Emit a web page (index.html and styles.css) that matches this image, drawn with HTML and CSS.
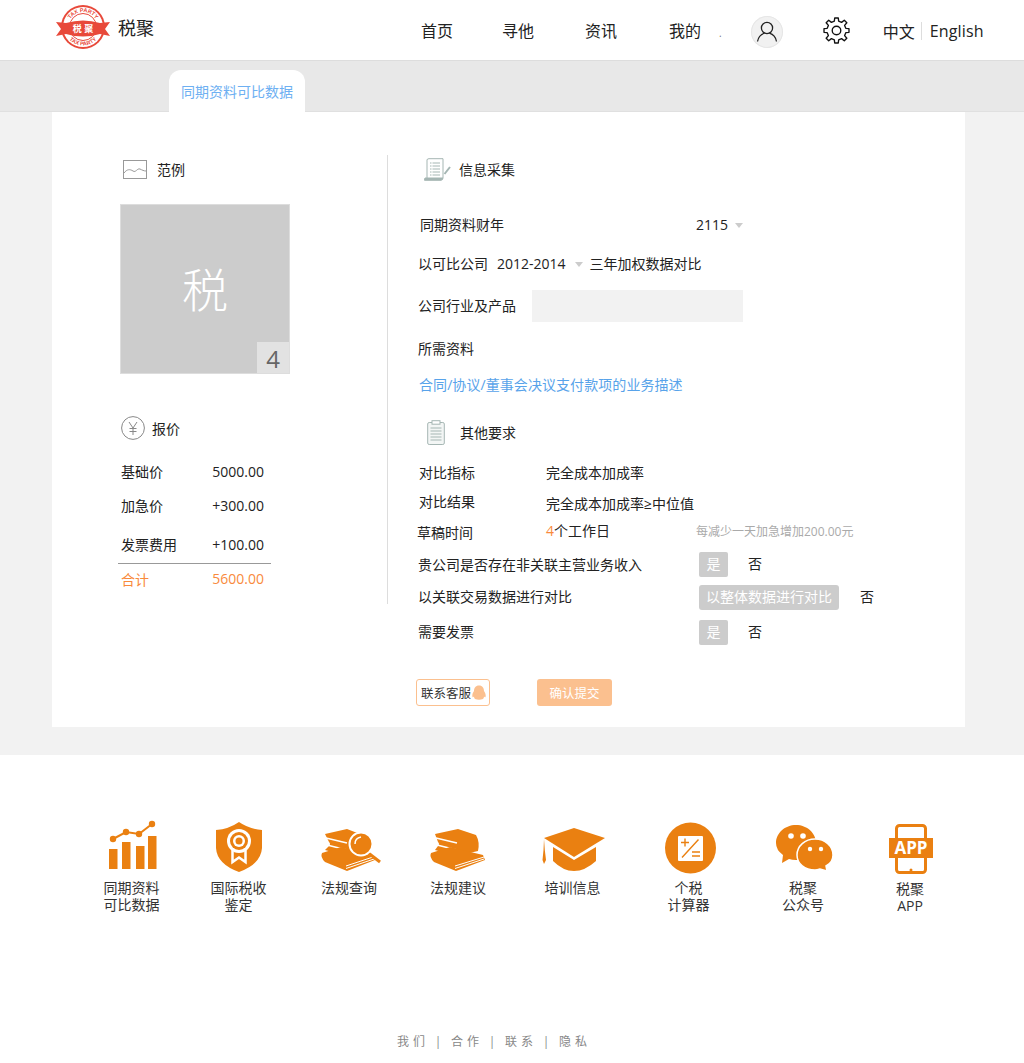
FILE: index.html
```html
<!DOCTYPE html>
<html lang="zh">
<head>
  <meta charset="UTF-8">
  <title>税聚 - 同期资料可比数据</title>
  <link rel="stylesheet" href="styles.css">
</head>
<body>
  <header class="top-bar">
    <a class="logo">
      <svg class="logo-mark" viewBox="0 0 54 48">
        <defs>
          <path id="arcTop" d="M12 24 A15 15 0 0 1 42 24"/>
          <path id="arcBottom" d="M8.500 24 A18.500 18.500 0 0 0 45.500 24"/>
        </defs>
        <circle cx="27" cy="24" r="22" fill="#e8493a"/>
        <circle cx="27" cy="24" r="20" fill="#fff"/>
        <circle cx="27" cy="24" r="13.500" fill="#fff" stroke="#e8493a" stroke-width="1"/>
        <text class="logo-arc"><textPath href="#arcTop" startOffset="50%" text-anchor="middle">TAX PARTY</textPath></text>
        <text class="logo-arc"><textPath href="#arcBottom" startOffset="50%" text-anchor="middle">TAX PARTY</textPath></text>
        <path d="M0 19 L10 20 Q27 15 44 20 L54 19 L49 26 L54 33 L44 31 Q27 36 10 31 L0 33 L5 26Z" fill="#e8493a"/>
        <text class="logo-name" x="27" y="29" text-anchor="middle">税 聚</text>
      </svg>
      <span class="logo-text">税聚</span>
    </a>
    <nav class="main-nav">
      <a class="nav-home">首页</a>
      <a class="nav-find">寻他</a>
      <a class="nav-news">资讯</a>
      <a class="nav-mine">我的</a>
    </nav>
    <span class="nav-dot">.</span>
    <span class="avatar">
      <svg viewBox="0 0 32 32" width="32" height="32" fill="none" stroke="#222" stroke-width="1.3">
        <circle cx="16" cy="12" r="5.600"/>
        <path d="M6.500 25.500 C7.500 20 11 18 13.500 17.200 M25.500 25.500 C24.500 20 21 18 18.500 17.200"/>
      </svg>
    </span>
    <svg class="gear" viewBox="0 0 24 24" fill="none" stroke="#111" stroke-width="1.2" stroke-linejoin="round">
      <path d="M10.400 .9 L13.600 .9 L13.910 3.720 L16.500 4.790 L18.920 2.820 L21.180 5.080 L19.210 7.500 L20.280 10.090 L23.100 10.400 L23.100 13.600 L20.280 13.910 L19.210 16.500 L21.180 18.920 L18.920 21.180 L16.500 19.210 L13.910 20.280 L13.600 23.100 L10.400 23.100 L10.090 20.280 L7.500 19.210 L5.080 21.180 L2.820 18.920 L4.790 16.500 L3.720 13.910 L.9 13.600 L.9 10.400 L3.720 10.090 L4.790 7.500 L2.820 5.080 L5.080 2.820 L7.500 4.790 L10.090 3.720Z"/>
      <circle cx="12" cy="12" r="3.800"/>
    </svg>
    <div class="lang">
      <a class="lang-cn">中文</a>
      <a class="lang-en">English</a>
    </div>
  </header>

  <div class="tab-bar">
    <div class="tab">同期资料可比数据</div>
  </div>

  <main class="page">
    <section class="card">
      <div class="columns">
        <div class="left-col">
          <div class="heading">
            <svg class="icon-sample" viewBox="0 0 24 19" fill="none" stroke="#999" stroke-width="1">
              <rect x=".5" y=".5" width="23" height="18"/>
              <path d="M1 13 C4 9 7 9 10 11 C13 13 14 8 17 9 C19 10 21 11 23 11"/>
            </svg>
            <span>范例</span>
          </div>
          <div class="sample-box">
            <span class="sample-char">税</span>
            <span class="sample-count">4</span>
          </div>
          <div class="heading heading-price">
            <svg class="icon-yen" viewBox="0 0 24 24" fill="none" stroke="#888" stroke-width="1">
              <circle cx="12" cy="12" r="11.400"/>
              <path d="M8 6 L12 12 L16 6 M12 12 V19 M8.500 12.500 H15.500 M8.500 15.500 H15.500"/>
            </svg>
            <span>报价</span>
          </div>
          <div class="price price-base"><span>基础价</span><span>5000.00</span></div>
          <div class="price price-rush"><span>加急价</span><span>+300.00</span></div>
          <div class="price price-bill"><span>发票费用</span><span>+100.00</span></div>
          <div class="price price-total"><span>合计</span><span>5600.00</span></div>
        </div>

        <div class="right-col">
          <div class="heading heading-info">
            <svg class="icon-scroll" viewBox="0 0 27 23" fill="none" stroke="#a5b6b3" stroke-width="1">
              <path d="M3 20 V2 Q3 .7 5 .7 H19 V20"/>
              <path d="M.5 22.300 H17 Q19 22 19 20 H1 Q.5 21 .5 22.300Z" fill="#a5b6b3"/>
              <path d="M6 5 H16 M6 8 H16 M6 11 H16 M6 14 H16 M6 17 H16" stroke-dasharray="1.5 1 8"/>
              <path d="M20.500 16 L26 9" stroke-width="2"/>
            </svg>
            <span>信息采集</span>
          </div>

          <div class="row row-year">
            <span class="year-label">同期资料财年</span>
            <span>2115</span><i class="caret"></i>
          </div>
          <div class="row row-range">
            <span class="range-label">以可比公司</span>
            <span>2012-2014</span><i class="caret caret-range"></i>
            <span>三年加权数据对比</span>
          </div>
          <div class="row row-product">
            <span class="product-label">公司行业及产品</span>
            <input class="product-input" type="text">
          </div>
          <div class="row row-need">所需资料</div>
          <div class="row row-link"><a class="doc-link">合同/协议/董事会决议支付款项的业务描述</a></div>

          <div class="heading heading-other">
            <svg class="icon-clip" viewBox="0 0 18 25" fill="none" stroke="#a5b6b3" stroke-width="1">
              <rect x=".7" y="2.500" width="16.600" height="22" rx="1.500" fill="#f3f6f5"/>
              <rect x="5" y=".7" width="8" height="3.500" fill="#fff"/>
              <path d="M3.500 8 H14.500 M3.500 11 H14.500 M3.500 14 H14.500 M3.500 17 H14.500 M3.500 20 H14.500"/>
            </svg>
            <span>其他要求</span>
          </div>

          <div class="row row-metric"><span class="key">对比指标</span><span>完全成本加成率</span></div>
          <div class="row row-result"><span class="key key-up">对比结果</span><span class="val-down">完全成本加成率≥中位值</span></div>
          <div class="row row-draft">
            <span class="key key-draft">草稿时间</span>
            <span class="draft-days"><em class="days-num">4</em>个工作日</span>
            <span class="hint">每减少一天加急增加200.00元</span>
          </div>
          <div class="row row-choice row-income">
            <span class="choice-label">贵公司是否存在非关联主营业务收入</span>
            <span class="pill">是</span><span class="no">否</span>
          </div>
          <div class="row row-choice row-related">
            <span class="choice-label">以关联交易数据进行对比</span>
            <span class="pill pill-wide">以整体数据进行对比</span><span class="no no-wide">否</span>
          </div>
          <div class="row row-choice row-bill">
            <span class="choice-label">需要发票</span>
            <span class="pill">是</span><span class="no">否</span>
          </div>

          <div class="actions">
            <button class="btn-service" type="button">联系客服
              <svg class="icon-qq" viewBox="0 0 14 15"><path d="M7 .5 C10.500 .5 12 3 12 6 C13.500 8 14 10 13.500 12 C13 12.500 12.500 12 12 11.500 C12 12.500 11.500 13.500 11 14 Q7 15.500 3 14 C2.500 13.500 2 12.500 2 11.500 C1.500 12 1 12.500 .5 12 C0 10 .5 8 2 6 C2 3 3.500 .5 7 .5Z" fill="#fbc08f"/></svg>
            </button>
            <button class="btn-submit" type="button">确认提交</button>
          </div>
        </div>
      </div>
    </section>
  </main>

  <footer class="footer">
    <div class="services">
      <a class="service">
        <svg viewBox="0 0 64 60" fill="#ea8011">
          <rect x="9" y="29" width="8.500" height="20"/>
          <rect x="22" y="22" width="8.500" height="27"/>
          <rect x="36" y="26" width="8.500" height="23"/>
          <rect x="48" y="16" width="8.500" height="33"/>
          <path d="M13 19 L26 12 L39 14 L52 4" fill="none" stroke="#ea8011" stroke-width="2"/>
          <circle cx="13" cy="19" r="3.200"/><circle cx="26" cy="12" r="3.200"/><circle cx="39" cy="14" r="3.200"/><circle cx="52" cy="4" r="3.200"/>
        </svg>
        <span>同期资料<br>可比数据</span>
      </a>
      <a class="service">
        <svg viewBox="0 0 64 60">
          <path d="M32 2 Q22 9 9 10 V28 Q10 44 32 52 Q54 44 55 28 V10 Q42 9 32 2Z" fill="#ea8011"/>
          <path d="M25.500 30 V42 L32 37.500 L38.500 42 V30" fill="none" stroke="#fff" stroke-width="2.500"/>
          <circle cx="32" cy="21" r="12" fill="#fff"/>
          <circle cx="32" cy="21" r="9" fill="#ea8011"/>
          <circle cx="32" cy="21" r="6" fill="#fff"/>
          <circle cx="32" cy="21" r="3.500" fill="#ea8011"/>
        </svg>
        <span>国际税收<br>鉴定</span>
      </a>
      <a class="service">
        <svg viewBox="0 0 64 60">
          <path d="M8 14 L30 9 L48 16 V30 L30 36 L8 30 L12 26 Q14 24 12 22Z" fill="#ea8011"/>
          <path d="M9 18 L30 23 M10 25 L30 30" stroke="#fff" stroke-width="1.500"/>
          <path d="M5 33 L24 27 L55 36 L58 40 L30 51 L8 42 Q3 37 5 33Z" fill="#ea8011"/>
          <path d="M29 46 L56 37 M29 48.500 L57 39" stroke="#fff" stroke-width="1"/>
          <path d="M50 32 L63 42" stroke="#ea8011" stroke-width="3"/>
          <circle cx="44" cy="24" r="11.500" fill="#ea8011" stroke="#fff" stroke-width="2"/>
          <path d="M38 24 Q38 18 44 17" fill="none" stroke="#fff" stroke-width="1.500"/>
        </svg>
        <span>法规查询</span>
      </a>
      <a class="service">
        <svg viewBox="0 0 64 60">
          <path d="M9 14 L32 9 L50 15 Q54 22 52 31 L30 36 L9 30 L12 26 Q14 24 12 22Z" fill="#ea8011"/>
          <path d="M10 18 L31 23 M11 25 L31 30" stroke="#fff" stroke-width="1.500"/>
          <path d="M5 33 L24 27 L57 35 L59 40 L30 51 L8 42 Q3 37 5 33Z" fill="#ea8011"/>
          <path d="M29 46 L58 37 M29 48.500 L58 39" stroke="#fff" stroke-width="1"/>
        </svg>
        <span>法规建议</span>
      </a>
      <a class="service">
        <svg viewBox="0 0 64 60" fill="#ea8011">
          <path d="M33 8 L64 18 L33 37 L3 18Z"/>
          <path d="M12 27 L33 40 L55 27 V41 Q44 51 33 51 Q22 51 12 41Z"/>
          <path d="M3 19 L3.800 30 L5 40 L3 44 L1.500 40 L2.500 30Z"/>
        </svg>
        <span>培训信息</span>
      </a>
      <a class="service">
        <svg viewBox="0 0 64 60">
          <circle cx="33.500" cy="28" r="25.500" fill="#ea8011"/>
          <rect x="21" y="16" width="25" height="25" rx="1" fill="#fff"/>
          <path d="M41.500 19.500 L25 37.500 M24 22.500 H32 M28 18.500 V26.500 M35 32 H43 M35 36 H43" stroke="#ea8011" stroke-width="1.400" fill="none"/>
        </svg>
        <span>个税<br>计算器</span>
      </a>
      <a class="service">
        <svg viewBox="0 0 64 60">
          <path d="M5 23 C5 13 14 5 25 5 C36 5 45 13 45 23 C45 33 36 40 25 40 Q21 40 18 39 L11 43 L12 35 Q5 30 5 23Z" fill="#ea8011"/>
          <path d="M26 35 C26 26 34 19 44 19 C54 19 62 26 62 35 C62 41 59 44 55 46 L56 51 L49 49 Q46 50 44 50 C34 50 26 44 26 35Z" fill="#ea8011" stroke="#fff" stroke-width="1.500"/>
          <circle cx="20" cy="16" r="2.800" fill="#fff"/><circle cx="32" cy="16" r="2.800" fill="#fff"/>
          <circle cx="39" cy="29" r="2.200" fill="#fff"/><circle cx="50" cy="29" r="2.200" fill="#fff"/>
        </svg>
        <span>税聚<br>公众号</span>
      </a>
      <a class="service service-app">
        <svg viewBox="0 0 64 60">
          <rect x="18.500" y="5.500" width="29" height="47" rx="3" fill="none" stroke="#ea8011" stroke-width="3"/>
          <rect x="11" y="18" width="44" height="20" fill="#ea8011"/>
          <text class="app-word" x="33" y="34" text-anchor="middle">APP</text>
          <circle cx="33" cy="50" r="1.500" fill="#ea8011"/>
        </svg>
        <span>税聚<br>APP</span>
      </a>
    </div>
    <div class="foot-links">
      <a>我们</a><b>|</b><a>合作</a><b>|</b><a>联系</a><b>|</b><a>隐私</a>
    </div>
  </footer>
</body>
</html>
```

FILE: styles.css
```css
* {
  box-sizing: border-box;
}

body {
  margin: 0;
  font-family: "Open Sans", "Noto Sans CJK SC", sans-serif;
  font-size: 14px;
  color: #222;
  background: #fff;
}

/* top bar */
.top-bar {
  display: flex;
  align-items: center;
  height: 61px;
  padding-left: 56px;
  background: #fff;
  border-bottom: 1px solid #ddd;
}

.logo {
  display: flex;
  align-items: center;
  width: 365px;
  margin-top: -6px;
}

.logo-mark {
  width: 54px;
  height: 48px;
}

.logo-arc {
  font-family: "Liberation Sans", sans-serif;
  font-size: 5.500px;
  font-weight: bold;
  fill: #e8493a;
}

.logo-name {
  font-size: 9px;
  font-weight: bold;
  fill: #fff;
}

.logo-text {
  margin-left: 8px;
  font-size: 18px;
  margin-top: -1px;
}

.main-nav {
  display: flex;
  font-size: 16px;
}

.nav-find {
  margin-left: 49px;
}

.nav-news {
  margin-left: 51px;
}

.nav-mine {
  margin-left: 52px;
}

.nav-dot {
  margin-left: 18px;
  font-size: 10px;
  color: #777;
  margin-top: 6px;
}

.avatar {
  width: 32px;
  height: 32px;
  margin-left: 29px;
  margin-top: 4px;
  border-radius: 50%;
  background: #f1f1f1;
  box-shadow: inset 0 0 0 1px #e6e6e6;
}

.avatar svg {
  display: block;
}

.gear {
  width: 27px;
  height: 27px;
  margin-left: 40px;
  margin-top: 1px;
}

.lang {
  display: flex;
  align-items: center;
  margin-left: 33px;
  margin-top: 2px;
  font-size: 16px;
}

.lang-en {
  margin-left: 6px;
  padding-left: 8px;
  border-left: 1px solid #ddd;
  line-height: 18px;
  letter-spacing: .15px;
}

/* tab strip */
.tab-bar {
  display: flex;
  align-items: flex-end;
  height: 51px;
  padding-left: 169px;
  background: #e8e8e8;
  border-bottom: 1px solid #e0e0e0;
}

.tab {
  width: 136px;
  height: 42px;
  margin-bottom: -1px;
  padding: 12px 0 0 12px;
  background: #fff;
  border-radius: 12px 12px 0 0;
  color: #6eb0f2;
  line-height: 20px;
  white-space: nowrap;
}

/* card */
.page {
  height: 643px;
  padding-left: 52px;
  background: #f2f2f2;
}

.card {
  width: 913px;
  height: 615px;
  background: #fff;
}

.columns {
  display: flex;
  padding: 43px 0 0 68px;
}

.left-col {
  width: 268px;
  height: 449px;
  border-right: 1px solid #ddd;
}

.heading {
  display: flex;
  align-items: center;
  height: 30px;
  padding-bottom: 2px;
}

.icon-sample {
  width: 24px;
  height: 19px;
  margin: 0 10px 0 3px;
}

.sample-box {
  position: relative;
  display: flex;
  align-items: center;
  justify-content: center;
  width: 170px;
  height: 170px;
  margin-top: 19px;
  background: #ccc;
  border: 1px solid #ddd;
}

.sample-char {
  color: #fff;
  font-size: 46px;
  font-weight: 300;
  margin-top: -5px;
}

.sample-count {
  position: absolute;
  right: 0;
  bottom: 0;
  width: 32px;
  height: 31px;
  background: #e2e2e2;
  color: #666;
  font-size: 24px;
  line-height: 33px;
  text-align: center;
}

.heading-price {
  margin-top: 40px;
}

.icon-yen {
  width: 24px;
  height: 24px;
  margin: 0 7px 0 1px;
}

.price {
  display: flex;
  justify-content: space-between;
  align-items: center;
  width: 153px;
  height: 30px;
  margin-left: -2px;
  padding: 0 7px 2px 3px;
}

.price-base {
  margin-top: 13px;
}

.price-rush {
  margin-top: 4px;
}

.price-bill {
  margin-top: 9px;
}

.price-total {
  height: 34px;
  margin-top: 3px;
  padding-bottom: 4px;
  border-top: 1px solid #999;
  color: #f98a3c;
}

.right-col {
  padding-left: 30px;
}

.heading-info span {
  margin-left: 8px;
}

.icon-scroll {
  width: 27px;
  height: 23px;
  margin-left: 6px;
}

.row {
  display: flex;
  align-items: center;
  height: 30px;
  padding-bottom: 2px;
  white-space: nowrap;
}

.row-year {
  margin-top: 25px;
}

.year-label {
  width: 276px;
  margin-left: 2px;
}

.caret {
  width: 0;
  height: 0;
  margin: 2px 0 0 7px;
  border-style: solid;
  border-width: 5px 4.500px 0;
  border-color: #ccc transparent transparent;
}

.row-range {
  margin-top: 9px;
}

.range-label {
  width: 79px;
}

.caret-range {
  margin-left: 9px;
  margin-right: 7px;
}

.row-product {
  height: 32px;
  margin-top: 11px;
  padding-bottom: 0;
}

.product-label {
  width: 114px;
  padding-bottom: 2px;
}

.product-input {
  width: 211px;
  height: 32px;
  border: 0;
  background: #f2f2f2;
}

.row-need {
  margin-top: 12px;
}

.row-link {
  margin-top: 6px;
  margin-left: 1px;
  letter-spacing: .07px;
}

.doc-link {
  color: #58a3ea;
}

.heading-other {
  margin-top: 18px;
}

.icon-clip {
  width: 18px;
  height: 25px;
  margin-left: 9px;
}

.heading-other span {
  margin-left: 15px;
}

.row-metric {
  margin-top: 10px;
  margin-left: 1px;
}

.row-result {
  margin-left: 1px;
}

.key {
  width: 127px;
}

.key-up {
  margin-top: -2px;
}

.val-down {
  margin-top: 2px;
}

.row-draft {
  height: 28px;
}

.key-draft {
  width: 129px;
  margin-left: -1px;
  margin-top: 2px;
}

.draft-days {
  width: 150px;
  margin-top: -2px;
}

.days-num {
  color: #f98a3c;
  font-style: normal;
}

.hint {
  font-size: 12px;
  color: #aaa;
}

.row-choice {
  height: 25px;
  padding-bottom: 0;
}

.row-income {
  margin-top: 6px;
}

.row-related {
  margin-top: 8px;
}

.row-bill {
  margin-top: 10px;
}

.choice-label {
  width: 281px;
  padding-bottom: 4px;
}

.row-income .choice-label {
  padding-bottom: 2px;
}

.pill {
  display: flex;
  align-items: center;
  justify-content: center;
  width: 29px;
  height: 25px;
  padding-bottom: 4px;
  background: #ccc;
  border-radius: 2px;
  color: #fff;
}

.pill-wide {
  width: 140px;
  border-radius: 3px;
}

.no {
  margin-left: 20px;
  padding-bottom: 4px;
}

.no-wide {
  margin-left: 21px;
}

.actions {
  display: flex;
  margin-top: 34px;
  margin-left: -2px;
}

.btn-service,
.btn-submit {
  display: flex;
  align-items: center;
  height: 27px;
  padding: 0;
  font-family: inherit;
  font-size: 12.500px;
  border-radius: 3px;
  white-space: nowrap;
}

.btn-service {
  width: 74px;
  padding-left: 4px;
  background: #fff;
  border: 1px solid #fbc08f;
  color: #333;
}

.icon-qq {
  width: 14px;
  height: 15px;
  margin-left: 1px;
}

.btn-submit {
  justify-content: center;
  width: 75px;
  margin-left: 47px;
  background: #fbc08f;
  border: 0;
  color: #fff;
}

/* footer */
.footer {
  height: 308px;
  padding-top: 65px;
  background: #fff;
}

.services {
  display: grid;
  grid-template-columns: 107px 107px 114px 104px 125px 107px 122px 92px;
  padding-left: 78px;
}

.service {
  display: flex;
  flex-direction: column;
  align-items: center;
  line-height: 17px;
  text-align: center;
  color: #333;
}

.service svg {
  width: 64px;
  height: 60px;
  margin-bottom: -1px;
  overflow: visible;
}

.service-app span {
  margin-top: 1px;
}

.app-word {
  font-family: "Open Sans", sans-serif;
  font-size: 17px;
  font-weight: bold;
  fill: #fff;
}

.foot-links {
  display: flex;
  justify-content: center;
  margin-top: 120px;
  padding-right: 36px;
  font-size: 12px;
  line-height: 16px;
  color: #888;
}

.foot-links a {
  letter-spacing: 4px;
}

.foot-links b {
  width: 22px;
  padding-right: 4px;
  font-weight: normal;
  text-align: center;
}
```
